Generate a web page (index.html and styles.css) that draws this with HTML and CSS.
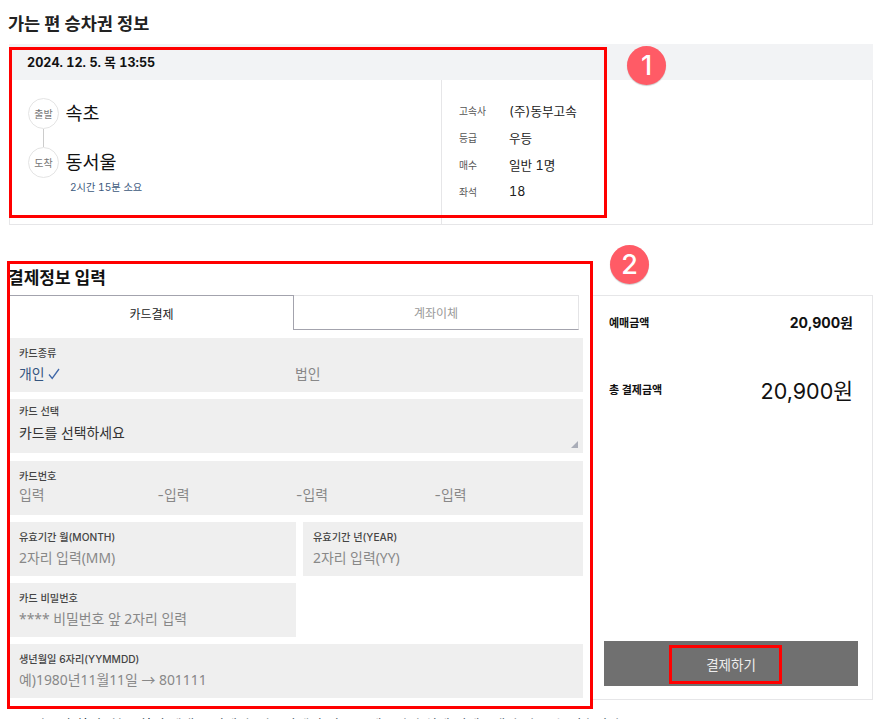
FILE: index.html
```html
<!DOCTYPE html>
<html lang="ko">
<head>
<meta charset="utf-8">
<title>결제</title>
<link rel="stylesheet" href="styles.css">
</head>
<body>
<main class="page">
  <h2 class="title">가는 편 승차권 정보</h2>
  <section class="ticket">
    <div class="ticket-date">2024. 12. 5. 목 13:55</div>
    <div class="ticket-body">
      <div class="route">
        <div class="stop"><span class="dot">출발</span><span class="city">속초</span></div>
        <div class="link"></div>
        <div class="stop"><span class="dot">도착</span><span class="city">동서울</span></div>
        <div class="duration">2시간 15분 소요</div>
      </div>
      <dl class="facts">
        <div class="fact"><dt>고속사</dt><dd>(주)동부고속</dd></div>
        <div class="fact"><dt>등급</dt><dd>우등</dd></div>
        <div class="fact"><dt>매수</dt><dd>일반 1명</dd></div>
        <div class="fact"><dt>좌석</dt><dd>18</dd></div>
      </dl>
    </div>
    <div class="mark mark-a"></div>
    <div class="badge badge-a">1</div>
  </section>

  <section class="pay">
    <div class="pay-form">
      <h2 class="pay-title">결제정보 입력</h2>
      <div class="tabs">
        <div class="tab tab-on">카드결제</div>
        <div class="tab tab-off">계좌이체</div>
      </div>
      <div class="field field-type">
        <label>카드종류</label>
        <div class="radio-row"><span class="radio on">개인 <svg class="check" viewBox="0 0 12 12" width="12" height="12"><path d="M1 6.5 L4.2 10.5 L11 1" fill="none" stroke="#3f67a8" stroke-width="1.3"/></svg></span><span class="radio">법인</span></div>
      </div>
      <div class="field field-select">
        <label>카드 선택</label>
        <div class="val dark">카드를 선택하세요</div>
        <svg class="grip" viewBox="0 0 7 7" width="7" height="7"><path d="M7 0V7H0Z" fill="#a9adb8"/></svg>
      </div>
      <div class="field field-num">
        <label>카드번호</label>
        <div class="num-row"><span>입력</span><span>-입력</span><span>-입력</span><span>-입력</span></div>
      </div>
      <div class="split">
        <div class="field half"><label>유효기간 월(MONTH)</label><div class="val">2자리 입력(MM)</div></div>
        <div class="field half-r"><label>유효기간 년(YEAR)</label><div class="val">2자리 입력(YY)</div></div>
      </div>
      <div class="field half"><label>카드 비밀번호</label><div class="val">**** 비밀번호 앞 2자리 입력</div></div>
      <div class="field field-last"><label>생년월일 6자리(YYMMDD)</label><div class="val">예)1980년11월11일 → 801111</div></div>
      <div class="mark mark-b"></div>
    </div>
    <aside class="summary">
      <div class="badge badge-b">2</div>
      <div class="sum-row"><span class="sum-label">예매금액</span><strong class="sum-val">20,900원</strong></div>
      <div class="sum-row total"><span class="sum-label">총 결제금액</span><span class="sum-total">20,900원</span></div>
      <button class="pay-btn" type="button">결제하기<span class="mark mark-c"></span></button>
    </aside>
  </section>
  <p class="note">카드사 할인, 청구 할인 혜택은 결제 후 카드사에서 별도로 제공되며 실제 결제금액과 다를 수 있습니다</p>
</main>
</body>
</html>
```

FILE: styles.css
```css
* { box-sizing: border-box; }
html, body { margin: 0; padding: 0; background: #fff; }
body { height: 719px; overflow: hidden; font-family: "Inter", "Noto Sans CJK KR", "Noto Sans", sans-serif; color: #111; }
.page { width: 873px; padding-top: 14px; }
.title { margin: 0 0 10px 8px; font-size: 17.5px; line-height: 20px; font-weight: 700; color: #222; }
.ticket { position: relative; margin-left: 9px; width: 864px; height: 181px; border: 1px solid #e6e6e8; border-top: 0; }
.ticket-date { background: #f2f3f5; height: 36px; margin: 0 -1px; padding: 10px 0 0 18px; font-size: 12.6px; line-height: 18px; font-weight: 700; font-variant-numeric: tabular-nums; }
.ticket-body { display: flex; height: 145px; }
.route { width: 432px; padding: 18px 0 0 18px; border-right: 1px solid #e6e6e8; }
.stop { display: flex; align-items: center; gap: 6.5px; height: 31px; }
.dot { width: 31px; height: 31px; border: 1px solid #e4e4e4; border-radius: 50%; display: flex; align-items: center; justify-content: center; font-size: 10px; color: #777; flex: none; }
.city { font-size: 18.5px; line-height: 24px; padding-bottom: 2px; color: #111; }
.link { width: 1px; height: 18px; margin-left: 15px; background: #ccc; }
.duration { font-size: 10.2px; line-height: 14px; margin: 2px 0 0 42px; color: #3d5a80; font-variant-numeric: tabular-nums; }
.facts { margin: 0; padding: 17px 0 0 17px; }
.fact { display: flex; align-items: center; height: 27px; }
.fact dt { width: 50px; font-size: 9.8px; color: #555; }
.fact dd { margin: 0; font-size: 12.6px; color: #222; font-variant-numeric: tabular-nums; }
.mark { position: absolute; z-index: 1; border: 3px solid #f00; pointer-events: none; }
.mark-a { left: -1px; top: 3px; width: 598px; height: 171px; }
.badge { position: absolute; width: 39px; height: 39px; border-radius: 50%; background: #ff5b66; color: #fff; font-size: 27px; line-height: 39px; text-align: center; box-shadow: 0 1px 1px #ccc; font-weight: 500; }
.badge-a { left: 617px; top: 2px; }
.pay { display: flex; margin-top: 37px; }
.pay-form { position: relative; width: 591px; flex: none; padding-left: 10px; }
.mark-b { left: 7px; top: -1px; width: 586px; height: 448px; }
.pay-title { height: 33px; margin: 0 0 0 -2px; padding-top: 5px; font-size: 17px; line-height: 22px; font-weight: 700; }
.tabs { display: flex; width: 569px; height: 35px; margin-bottom: 8px; }
.tab { display: flex; align-items: center; justify-content: center; font-size: 12px; height: 35px; }
.tab-on { width: 284px; border-top: 1px solid #a3a3ad; border-right: 1px solid #a3a3ad; color: #222; }
.tab-off { width: 285px; border-top: 1px solid #e4e4e6; border-right: 1px solid #e4e4e6; border-bottom: 1px solid #a3a3ad; color: #999; }
.field { position: relative; background: #efefef; width: 573px; height: 54px; padding: 8px 0 0 9px; margin-bottom: 7px; }
.field label { display: block; font-size: 10.2px; line-height: 14px; font-weight: 500; color: #444; }
.field-select { padding-top: 5px; margin-bottom: 8px; }
.field-last { margin-bottom: 0; }
.val { font-family: "Noto Sans", "Noto Sans CJK KR", sans-serif; font-size: 13.9px; line-height: 20px; margin-top: 4px; color: #888; }
.val.dark { margin-top: 5px; color: #333; }
.radio-row { display: flex; margin-top: 4px; font-size: 13.9px; line-height: 20px; }
.radio { width: 276px; color: #888; }
.radio.on { color: #35557f; }
.check { vertical-align: -1px; }
.grip { position: absolute; right: 5px; bottom: 5px; }
.num-row { display: flex; margin-top: 2px; font-size: 13.9px; line-height: 20px; color: #888; }
.num-row span { width: 138.5px; }
.split { display: flex; gap: 7px; width: 573px; }
.split .field { flex: none; }
.half { width: 286px; }
.half-r { width: 280px; padding-left: 10px; }
.summary { position: relative; display: flex; flex-direction: column; width: 282px; height: 405px; margin-top: 33px; padding-top: 16px; border: 1px solid #e6e6e8; }
.badge-b { left: 18px; top: -51px; }
.sum-row { display: flex; justify-content: space-between; align-items: center; height: 20px; padding: 0 19px 0 17px; }
.sum-label { font-size: 11px; font-weight: 700; }
.sum-val { font-size: 14px; }
.total { height: 30px; margin-top: 42px; }
.sum-total { font-size: 21.5px; }
.pay-btn { position: relative; flex: none; margin: auto 0 13px 12px; width: 254px; height: 45px; border: 0; background: #707070; color: #eee; font-size: 13.5px; font-family: inherit; }
.mark-c { left: 65px; top: 4px; width: 113px; height: 39px; }
.note { margin: 15px 0 0 33px; font-size: 14px; line-height: 20px; color: #234; white-space: nowrap; }
```
